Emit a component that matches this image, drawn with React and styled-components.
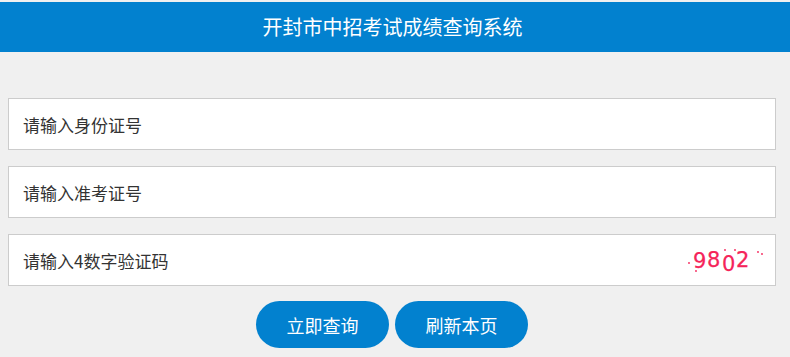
import React, { useState } from "react";
import styled, { createGlobalStyle } from "styled-components";

const GlobalStyle = createGlobalStyle`
  body {
    margin: 0;
    background: #f0f0f0;
    font-family: "Noto Sans CJK SC", "Noto Sans", sans-serif;
  }
`;

function Captcha() {
  return (
    <CaptchaSvg width="80" height="30" viewBox="0 0 80 30">
      <g
        fill="#f5245a"
        stroke="#f5245a"
        strokeWidth="0.25"
        fontFamily="'DejaVu Sans', sans-serif"
        fontSize="21"
      >
        <text x="8" y="23">9</text>
        <text x="22" y="22">8</text>
        <text x="37" y="26">0</text>
        <text x="51" y="22">2</text>
      </g>
      <g fill="#f5245a">
        <circle cx="4" cy="18" r="0.9" />
        <circle cx="11" cy="26" r="0.9" />
        <circle cx="40" cy="5" r="0.9" />
        <circle cx="50" cy="5" r="0.9" />
        <circle cx="73" cy="7" r="0.9" />
        <circle cx="77" cy="9" r="0.9" />
      </g>
    </CaptchaSvg>
  );
}

function App() {
  const [idNo, setIdNo] = useState("");
  const [examNo, setExamNo] = useState("");
  const [code, setCode] = useState("");

  const handleSubmit = (evt) => {
    evt.preventDefault();
  };

  return (
    <>
      <GlobalStyle />
      <Header>开封市中招考试成绩查询系统</Header>
      <Form onSubmit={handleSubmit}>
        <Field>
          <Input
            name="idNo"
            placeholder="请输入身份证号"
            value={idNo}
            onChange={(e) => setIdNo(e.target.value)}
          />
        </Field>
        <Field>
          <Input
            name="examNo"
            placeholder="请输入准考证号"
            value={examNo}
            onChange={(e) => setExamNo(e.target.value)}
          />
        </Field>
        <Field>
          <Input
            name="code"
            placeholder="请输入4数字验证码"
            value={code}
            onChange={(e) => setCode(e.target.value)}
          />
          <Captcha />
        </Field>
        <ButtonRow>
          <Button type="submit">立即查询</Button>
          <Button type="button" onClick={() => window.location.reload()}>
            刷新本页
          </Button>
        </ButtonRow>
      </Form>
    </>
  );
}

// Styled Components
const Header = styled.div`
  margin-top: 2px;
  height: 50px;
  line-height: 50px;
  background: #0281cf;
  color: #fff;
  font-size: 20px;
  text-align: center;
  padding-right: 5px;
`;

const Form = styled.form`
  width: 768px;
  margin: 46px 0 0 8px;
  display: flex;
  flex-direction: column;
  gap: 16px;
`;

const Field = styled.div`
  box-sizing: border-box;
  height: 52px;
  background: #fff;
  border: 1px solid #cccccc;
  display: flex;
  align-items: center;
  padding: 0 10px 0 14px;
`;

const Input = styled.input`
  flex: 1;
  min-width: 0;
  border: none;
  outline: none;
  background: transparent;
  font-family: "Noto Sans CJK SC", "Noto Sans", sans-serif;
  font-size: 17px;
  color: #333;
  padding: 0;

  &::placeholder {
    color: #333;
    opacity: 1;
  }
`;

const CaptchaSvg = styled.svg`
  flex: none;
  display: block;
`;

const ButtonRow = styled.div`
  display: flex;
  justify-content: center;
  gap: 6px;
  margin-top: -1px;
`;

const Button = styled.button`
  width: 133px;
  height: 47px;
  border: none;
  border-radius: 24px;
  background: #0281cf;
  color: #fff;
  font-family: "Noto Sans CJK SC", "Noto Sans", sans-serif;
  font-size: 18px;
  cursor: pointer;
`;

export default App;
